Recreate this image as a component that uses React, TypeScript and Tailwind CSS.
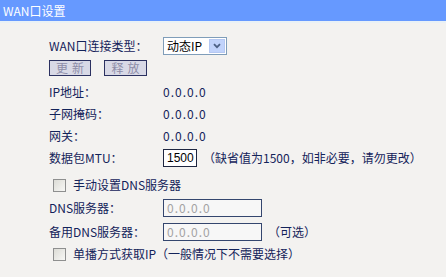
import React from "react";

const font = { fontFamily: '"Noto Sans CJK SC", "Liberation Sans", sans-serif' };

function Checkbox() {
  return (
    <span className="inline-block w-[13px] h-[13px] border border-[#8e8f8f] bg-gradient-to-br from-[#dcdcd6] to-[#f7f7f5] box-border" />
  );
}

function Label({ children }: { children: React.ReactNode }) {
  return <div className="w-[114px] shrink-0">{children}</div>;
}

function Row({ children, className = "" }: { children: React.ReactNode; className?: string }) {
  return <div className={`flex items-center h-[22px] pl-[49px] ${className}`}>{children}</div>;
}

export default function App() {
  return (
    <div className="w-[446px] h-[277px] bg-[#f3f2f0] text-[12px] leading-none text-[#13235a] overflow-hidden" style={font}>
      <div className="h-[21px] bg-[#6699ff] flex items-center pl-[3px] text-white text-[12px]">WAN口设置</div>
      <div className="h-[2px] bg-[#e9f1f6]" />
      <div className="pt-[14px]">
        <div className="flex items-center h-[18px] pl-[49px]">
          <Label>WAN口连接类型：</Label>
          <div className="flex items-center w-[64px] h-[18px] border border-[#7f9db9] bg-white box-border">
            <span className="flex-1 pl-[3px] text-[12px] text-black">动态IP</span>
            <span className="w-[16px] h-[14px] mr-[1px] bg-[#c1d3fb] border border-[#b5c8f2] flex items-center justify-center">
              <svg width="8" height="6" viewBox="0 0 8 6">
                <path d="M1 1.2 L4 4.2 L7 1.2" fill="none" stroke="#4d6185" strokeWidth="1.8" />
              </svg>
            </span>
          </div>
        </div>
        <div className="flex items-center h-[16px] mt-[5px] pl-[49px] gap-[13px]">
          <span className="w-[42px] h-[16px] border border-[#2b3160] bg-[#d8d9e6] text-[#8d8da8] flex items-center justify-center tracking-[4px] pl-[4px]">更新</span>
          <span className="w-[43px] h-[16px] border border-[#2b3160] bg-[#d8d9e6] text-[#8d8da8] flex items-center justify-center tracking-[4px] pl-[4px]">释放</span>
        </div>
        <div className="mt-[5px]">
          <Row>
            <Label>IP地址：</Label>
            <span className="tracking-[1px]">0.0.0.0</span>
          </Row>
          <Row>
            <Label>子网掩码：</Label>
            <span className="tracking-[1px]">0.0.0.0</span>
          </Row>
          <Row>
            <Label>网关：</Label>
            <span className="tracking-[1px]">0.0.0.0</span>
          </Row>
          <Row>
            <Label>数据包MTU：</Label>
            <span className="w-[34px] h-[18px] border border-[#1e2640] bg-white flex items-center pl-[3px] text-black text-[12px]" style={{ fontFamily: '"Liberation Sans", sans-serif' }}>1500</span>
            <span className="ml-[6px]">（缺省值为1500，如非必要，请勿更改）</span>
          </Row>
        </div>
        <div className="flex items-center h-[22px] mt-[5px] pl-[53px]">
          <Checkbox />
          <span className="ml-[7px]">手动设置DNS服务器</span>
        </div>
        <Row className="mt-[1px]">
          <Label>DNS服务器：</Label>
          <span className="w-[99px] h-[18px] border border-[#34466e] bg-[#f7f7f7] flex items-center pl-[3px] text-[#a3a3a3] tracking-[1px]">0.0.0.0</span>
        </Row>
        <Row className="mt-[2px]">
          <Label>备用DNS服务器：</Label>
          <span className="w-[99px] h-[18px] border border-[#34466e] bg-[#f7f7f7] flex items-center pl-[3px] text-[#a3a3a3] tracking-[1px]">0.0.0.0</span>
          <span className="ml-[6px]">（可选）</span>
        </Row>
        <div className="flex items-center h-[22px] pl-[53px]">
          <Checkbox />
          <span className="ml-[7px]">单播方式获取IP（一般情况下不需要选择）</span>
        </div>
      </div>
    </div>
  );
}
